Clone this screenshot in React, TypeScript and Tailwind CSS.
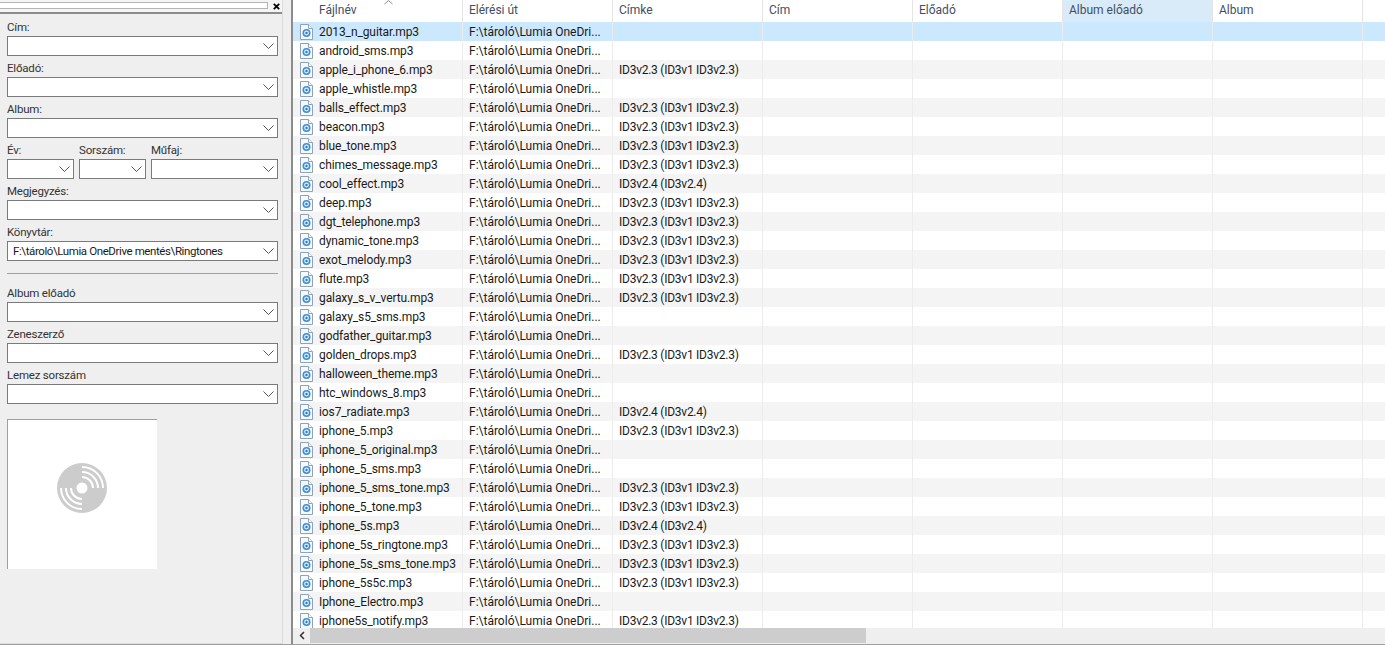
import React from 'react';

const t23 = 'ID3v2.3 (ID3v1 ID3v2.3)';
const t24 = 'ID3v2.4 (ID3v2.4)';

const rows: [string, string][] = [
  ['2013_n_guitar.mp3', ''],
  ['android_sms.mp3', ''],
  ['apple_i_phone_6.mp3', t23],
  ['apple_whistle.mp3', ''],
  ['balls_effect.mp3', t23],
  ['beacon.mp3', t23],
  ['blue_tone.mp3', t23],
  ['chimes_message.mp3', t23],
  ['cool_effect.mp3', t24],
  ['deep.mp3', t23],
  ['dgt_telephone.mp3', t23],
  ['dynamic_tone.mp3', t23],
  ['exot_melody.mp3', t23],
  ['flute.mp3', t23],
  ['galaxy_s_v_vertu.mp3', t23],
  ['galaxy_s5_sms.mp3', ''],
  ['godfather_guitar.mp3', ''],
  ['golden_drops.mp3', t23],
  ['halloween_theme.mp3', ''],
  ['htc_windows_8.mp3', ''],
  ['ios7_radiate.mp3', t24],
  ['iphone_5.mp3', t23],
  ['iphone_5_original.mp3', ''],
  ['iphone_5_sms.mp3', ''],
  ['iphone_5_sms_tone.mp3', t23],
  ['iphone_5_tone.mp3', t23],
  ['iphone_5s.mp3', t24],
  ['iphone_5s_ringtone.mp3', t23],
  ['iphone_5s_sms_tone.mp3', t23],
  ['iphone_5s5c.mp3', t23],
  ['Iphone_Electro.mp3', ''],
  ['iphone5s_notify.mp3', t23],
];

const Combo = ({ value }: { value?: string }) => (
  <div className="flex h-[20px] items-center justify-between border border-[#7a7a7a] bg-white pl-[5px] pr-[3px]">
    <span className="whitespace-nowrap text-[11.5px] tracking-[-0.4px] text-[#1a1a1a]">{value}</span>
    <svg width="11" height="6" viewBox="0 0 11 6" className="shrink-0">
      <path d="M.5 .5L5.5 5.5L10.5 .5" fill="none" stroke="#555" />
    </svg>
  </div>
);

const Label = ({ text }: { text: string }) => (
  <div className="flex h-[21px] items-end pb-px text-[11.5px] tracking-[-0.2px]">{text}</div>
);

const Field = ({ label, value }: { label: string; value?: string }) => (
  <div className="flex h-[41px] flex-col">
    <Label text={label} />
    <Combo value={value} />
  </div>
);

const FileIcon = () => (
  <svg width="13" height="16" viewBox="0 0 13 16" className="shrink-0">
    <path d="M.5 .5H8.5L12.5 4.5V15.5H.5Z" fill="#f7fafd" stroke="#8fa3b8" />
    <path d="M8.5 .5V4.5H12.5" fill="#fff" stroke="#8fa3b8" />
    <circle cx="6.5" cy="9" r="4" fill="#3f8fd4" />
    <circle cx="6.5" cy="9" r="2.4" fill="#e4f0fa" />
    <circle cx="6.5" cy="9" r="1.2" fill="#2a78bf" />
  </svg>
);

const Disc = () => (
  <svg width="50" height="50" viewBox="0 0 50 50">
    <circle cx="25" cy="25" r="25" fill="#cccccc" />
    <g fill="none" stroke="#fff" strokeWidth="2">
      <path d="M25 4A21 21 0 0 1 46 25" />
      <path d="M25 9A16 16 0 0 1 41 25" />
      <path d="M25 14A11 11 0 0 1 36 25" />
      <path d="M25 46A21 21 0 0 1 4 25" />
      <path d="M25 41A16 16 0 0 1 9 25" />
      <path d="M25 36A11 11 0 0 1 14 25" />
    </g>
    <circle cx="25" cy="25" r="5.5" fill="#fff" />
  </svg>
);

const columns = ['Elérési út', 'Címke', 'Cím', 'Előadó', 'Album előadó', 'Album'];

export default function App() {
  return (
    <div className="flex h-[648px] w-[1385px] overflow-hidden bg-white font-['Roboto',sans-serif] text-[12px] leading-[16px] text-[#333]">
      {/* left tag panel */}
      <div className="flex h-[645px] w-[291px] shrink-0 border-b border-[#a0a0a0] bg-[#efefef]">
        <div className="flex w-[283px] shrink-0 flex-col border-r border-b border-[#dcdcdc]">
          <div className="flex h-[14px] shrink-0 items-start border-b-2 border-[#8c8c8c] bg-[#f5f5f5]">
            <div className="mt-[2px] h-[7px] w-[268px] border-y border-r border-[#b4b4b4] bg-white" />
            <svg width="7" height="7" viewBox="0 0 7 7" className="ml-[5px] mt-[3px]">
              <path d="M.8 .8L6.2 6.2M6.2 .8L.8 6.2" stroke="#000" strokeWidth="1.8" />
            </svg>
          </div>
          <div className="flex flex-col px-[7px] pt-px">
            <div className="w-[271px]">
              <Field label="Cím:" />
              <Field label="Előadó:" />
              <Field label="Album:" />
              <div className="flex h-[41px] gap-[5px]">
                <div className="flex w-[67px] flex-col">
                  <Label text="Év:" />
                  <Combo />
                </div>
                <div className="flex w-[67px] flex-col">
                  <Label text="Sorszám:" />
                  <Combo />
                </div>
                <div className="flex flex-1 flex-col">
                  <Label text="Műfaj:" />
                  <Combo />
                </div>
              </div>
              <Field label="Megjegyzés:" />
              <Field label="Könyvtár:" value="F:\tároló\Lumia OneDrive mentés\Ringtones" />
              <div className="h-[20px] pt-[12px]">
                <div className="h-px bg-[#a0a0a0]" />
              </div>
              <Field label="Album előadó" />
              <Field label="Zeneszerző" />
              <Field label="Lemez sorszám" />
            </div>
            <div className="mt-[15px] flex h-[150px] w-[150px] items-center justify-center border-t border-l border-[#a0a0a0] bg-white pb-[13px] pr-px">
              <Disc />
            </div>
          </div>
        </div>
      </div>

      {/* file list */}
      <div className="flex h-[645px] min-w-0 flex-1 flex-col border-l-2 border-b border-[#8c8c8c] border-b-[#a0a0a0]">
        <div className="relative flex h-[22px] shrink-0 text-[#3f4f63]">
          <div className="flex w-[170px] shrink-0 items-center border-r border-[#e5e5e5] pb-[2px] pl-[26px]">Fájlnév</div>
          {columns.map((c) => (
            <div
              key={c}
              className={`flex w-[150px] shrink-0 items-center border-r border-[#e5e5e5] pb-[2px] pl-[6px] ${c === 'Album előadó' ? 'bg-[#d9ebf9]' : ''}`}
            >
              {c}
            </div>
          ))}
          <svg width="9" height="5" viewBox="0 0 9 5" className="absolute left-[91px] top-0">
            <path d="M.5 4L4.5 .5L8.5 4" fill="none" stroke="#8a8a8a" />
          </svg>
        </div>
        <div className="min-h-0 flex-1 overflow-hidden">
          {rows.map(([name, tag], i) => (
            <div
              key={name}
              className={`flex h-[19px] items-center text-[#1a1a1a] ${i === 0 ? 'bg-[#cce8ff]' : i % 2 === 0 ? 'bg-[#f4f4f4]' : 'bg-white'}`}
            >
              <div className="flex h-full w-[170px] shrink-0 items-center gap-[6px] border-r border-[#ececec] pl-[7px]">
                <FileIcon />
                <span className="whitespace-nowrap tracking-[-0.1px]">{name}</span>
              </div>
              <div className="flex h-full w-[150px] shrink-0 items-center border-r border-[#ececec] pl-[6px]">F:\tároló\Lumia OneDri...</div>
              <div className="flex h-full w-[150px] shrink-0 items-center border-r border-[#ececec] pl-[6px] tracking-[-0.25px]">{tag}</div>
              {[0, 1, 2, 3].map((n) => (
                <div key={n} className="h-full w-[150px] shrink-0 border-r border-[#ececec]" />
              ))}
            </div>
          ))}
        </div>
        <div className="flex h-[16px] shrink-0 bg-[#efefef]">
          <div className="flex h-[15px] w-[17px] items-center justify-center">
            <svg width="6" height="9" viewBox="0 0 6 9">
              <path d="M5 1L1.5 4.5L5 8" fill="none" stroke="#333" strokeWidth="1.5" />
            </svg>
          </div>
          <div className="h-[15px] w-[556px] bg-[#cdcdcd]" />
        </div>
      </div>
    </div>
  );
}
